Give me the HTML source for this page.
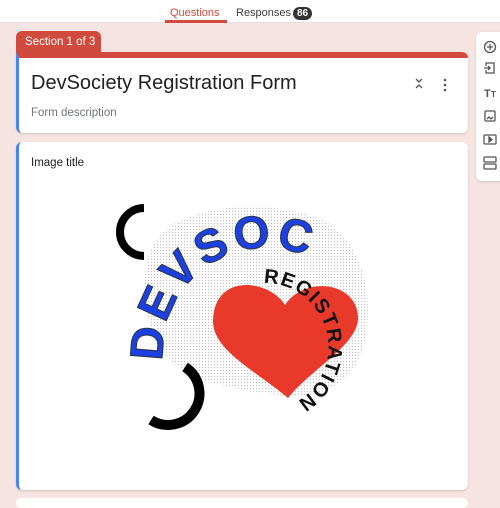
<!DOCTYPE html>
<html><head><meta charset="utf-8"><style>
*{margin:0;padding:0;box-sizing:border-box}
body{width:500px;height:500px;overflow:hidden;background:#f6e4e2;font-family:"Liberation Sans",Arial,sans-serif;position:relative}
.top{position:absolute;left:0;top:0;width:500px;height:23px;background:#fff;border-bottom:1px solid #eadcdc}
.tab{position:absolute;top:7px;font-size:11px;color:#3c3c3c}
.q{left:170px;color:#d04b3d}
.ul{position:absolute;left:165px;top:20px;width:62px;height:3px;background:#d04b3d}
.badge{position:absolute;left:293px;top:7px;width:19px;height:13px;border-radius:7px;background:#333;color:#fff;font-size:10px;font-weight:bold;text-align:center;line-height:13px}
.sec{position:absolute;left:16px;top:31px;width:85px;height:26px;background:#d04b3d;border-radius:6px 6px 0 0;color:#fff;font-size:11.5px;padding:5px 0 0 9px}
.card{position:absolute;left:16px;width:452px;background:#fff;border-radius:6px;box-shadow:0 1px 2px rgba(0,0,0,.15);border-left:3px solid #4a86f0}
.c1{top:52px;height:81px;border-top:6px solid #d04b3d;border-radius:0 6px 6px 6px}
.c2{top:142px;height:348px}
.title{position:absolute;left:12px;top:14px;font-size:20px;color:#202124}
.desc{position:absolute;left:12px;top:49px;font-size:11.5px;color:#70757a}
.it{position:absolute;left:12px;top:15px;font-size:11.5px;color:#202124}
.tool{position:absolute;left:476px;top:32px;width:30px;height:149px;background:#fff;border-radius:6px 0 0 6px;box-shadow:0 1px 2px rgba(0,0,0,.15)}
.c3{position:absolute;left:16px;top:498px;width:452px;height:10px;background:#fff;border-radius:6px}
</style></head><body>
<div class="top"></div>
<div class="tab q">Questions</div>
<div class="ul"></div>
<div class="tab" style="left:236px">Responses</div>
<div class="badge">86</div>
<div class="sec">Section 1 of 3</div>
<div class="card c1">
<div class="title">DevSociety Registration Form</div>
<div class="desc">Form description</div>
<svg style="position:absolute;left:395px;top:18px" width="40" height="20"><path d="M2 3l3 3 3-3M2 12l3-3 3 3" stroke="#555" stroke-width="1.3" fill="none"/><circle cx="31" cy="4" r="1.3" fill="#555"/><circle cx="31" cy="9" r="1.3" fill="#555"/><circle cx="31" cy="14" r="1.3" fill="#555"/></svg>
</div>
<div class="card c2"><div class="it">Image title</div></div>
<div class="c3"></div>
<div class="tool">
<svg width="30" height="149" fill="none" stroke="#555" stroke-width="1.3">
<circle cx="14" cy="15" r="5.5"/><path d="M14 12v6M11 15h6"/>
<path d="M10 34v-3h8v10h-8v-3M8 36h6l-2-2M14 36l-2 2"/>
<text x="8" y="65" font-size="11" font-weight="bold" fill="#555" stroke="none" font-family="Liberation Sans">T</text><text x="15" y="65" font-size="8" font-weight="bold" fill="#555" stroke="none" font-family="Liberation Sans">T</text>
<rect x="9" y="79" width="10" height="10" rx="1"/><path d="M11 87l2-2 2 2 2-2"/>
<rect x="8" y="103" width="12" height="9" rx="1"/><path d="M13 105v5l3-2.5z" fill="#555"/>
<rect x="8" y="125" width="12" height="5" rx="1"/><rect x="8" y="132" width="12" height="5" rx="1"/>
</svg>
</div>
<svg style="position:absolute;left:0;top:0" width="500" height="500">
<defs>
<pattern id="dots" width="3" height="3" patternUnits="userSpaceOnUse"><circle cx="1.5" cy="1.5" r="0.7" fill="#aaa"/></pattern>
<path id="p1" d="M163.6 362.9 A103 103 0 0 1 330 270"/>
<path id="p2" d="M259.6 283.2 A62 62 0 1 1 270 410"/>
</defs>
<path d="M160 235 C190 205 260 200 310 215 C360 230 375 290 365 340 C355 385 320 400 280 395 C230 390 175 380 155 340 C140 300 140 260 160 235Z" fill="url(#dots)" opacity="0.7"/>
<path d="M144 208 A23 23 0 0 0 144 256" stroke="#000" stroke-width="8" fill="none"/>
<path d="M185 367 A30 30 0 0 1 151 420" stroke="#000" stroke-width="10" fill="none"/>
<path d="M285 305 C270 280 215 272 213 320 C212 350 255 370 288 398 C310 370 358 345 358 318 C358 282 305 275 285 305Z" fill="#e8392b"/>
<text font-family="Liberation Sans" font-weight="bold" font-size="46" fill="#1c3fe6" stroke="#2a3a55" stroke-width="1.2" letter-spacing="4"><textPath href="#p1" startOffset="2">DEVSOC</textPath></text>
<text font-family="Liberation Sans" font-weight="bold" font-size="20" fill="#111" letter-spacing="1.5"><textPath href="#p2" startOffset="4">REGISTRATION</textPath></text>
</svg>
</body></html>
